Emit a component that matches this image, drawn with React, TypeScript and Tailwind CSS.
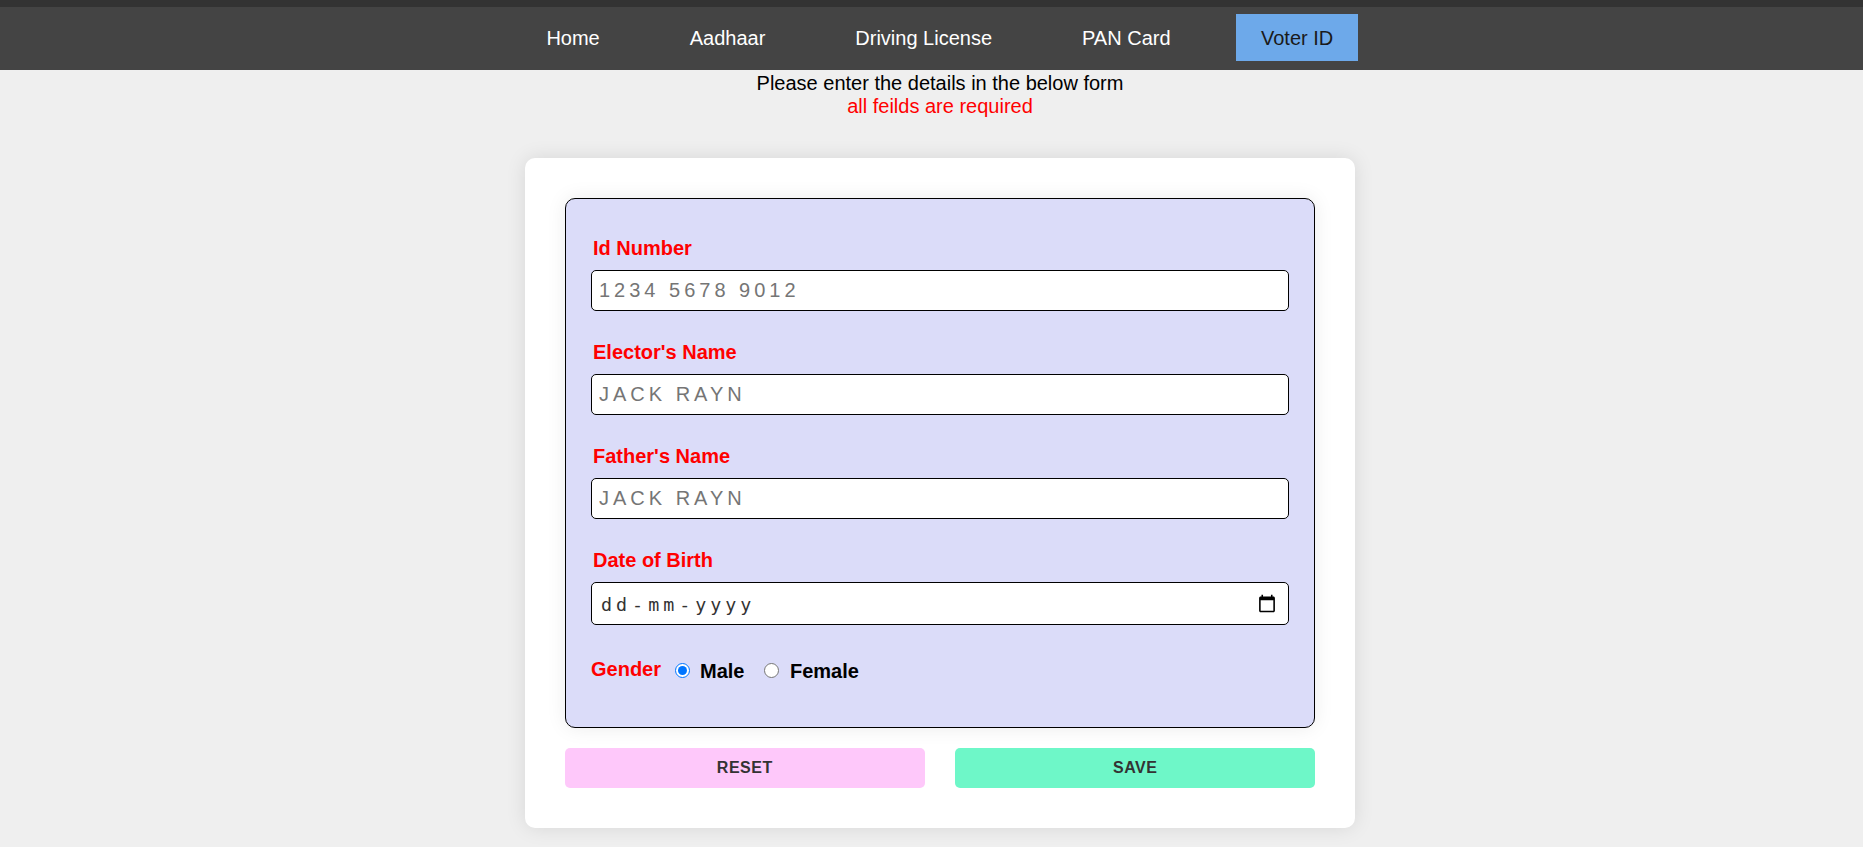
import { useState } from "react";

const links = ["Home", "Aadhaar", "Driving License", "PAN Card"];

const fields = [
  { label: "Id Number", placeholder: "1234 5678 9012" },
  { label: "Elector's Name", placeholder: "JACK RAYN" },
  { label: "Father's Name", placeholder: "JACK RAYN" },
];

function Radio({ checked, onSelect }: { checked: boolean; onSelect: () => void }) {
  return (
    <button
      type="button"
      role="radio"
      aria-checked={checked}
      onClick={onSelect}
      className={
        checked
          ? "flex h-[15px] w-[15px] items-center justify-center rounded-full border-[1.5px] border-[#0075ff] bg-white"
          : "flex h-[15px] w-[15px] items-center justify-center rounded-full border border-[#767676] bg-white"
      }
    >
      {checked && <span className="h-[9px] w-[9px] rounded-full bg-[#0075ff]" />}
    </button>
  );
}

export default function App() {
  const [gender, setGender] = useState("Male");

  return (
    <div className="h-[847px] overflow-hidden bg-[#efefef] font-['Liberation_Sans',Arial,sans-serif] text-xl leading-[23px] text-black">
      <header className="h-[70px] border-t-[7px] border-[#333] bg-[#444]">
        <nav className="flex gap-[41.2px] pt-[7px] pl-[522px] text-white">
          {links.map((link) => (
            <a key={link} className="h-[47px] px-[24.4px] pt-[13px] whitespace-nowrap">
              {link}
            </a>
          ))}
          <a className="h-[47px] w-[122px] bg-[#6da9ea] pt-[13px] text-center whitespace-nowrap text-[#1a1a1a]">
            Voter ID
          </a>
        </nav>
      </header>

      <main className="flex flex-col items-center pl-[17px]">
        <p className="pt-0.5 text-center">
          Please enter the details in the below form
          <br />
          <span className="text-[#f00]">all feilds are required</span>
        </p>

        <form className="mt-10 h-[670px] w-[830px] rounded-[10px] bg-white p-10 shadow-[0_0_20px_rgba(0,0,0,0.1)]">
          <section className="h-[530px] rounded-[10px] border border-black bg-[#dbdcf9] px-[25px] pt-[38px] shadow-[0_0_20px_rgba(0,0,0,0.08)]">
            {fields.map(({ label, placeholder }) => (
              <div key={label} className="h-[104px]">
                <label className="block pl-0.5 font-bold text-[#f00]">{label}</label>
                <input
                  placeholder={placeholder}
                  className="mt-[10px] block h-[41px] w-full rounded-[5px] border border-black bg-white px-[7px] tracking-[4px] outline-none placeholder:text-[#757575]"
                />
              </div>
            ))}

            <label className="block pl-0.5 font-bold text-[#f00]">Date of Birth</label>
            <div className="mt-[10px] flex h-[43px] items-center justify-between rounded-[5px] border border-black bg-white pr-[11px] pl-[9px]">
              <span className="flex gap-0.5 pt-px font-['DejaVu_Sans_Mono',monospace] text-[18.33px] tracking-[4px] text-[#333]">
                <span>dd</span>
                <span className="-mx-px">-</span>
                <span>mm</span>
                <span className="-mx-px">-</span>
                <span>yyyy</span>
              </span>
              <svg viewBox="0 0 24 24" className="h-[19px] w-5">
                <path
                  fill="#000"
                  d="M20 3h-1V1h-2v2H7V1H5v2H4c-1.1 0-2 .9-2 2v16c0 1.1.9 2 2 2h16c1.1 0 2-.9 2-2V5c0-1.1-.9-2-2-2zm0 18H4V8h16v13z"
                />
              </svg>
            </div>

            <div className="mt-[33px] flex items-start font-bold">
              <span className="w-[84px] text-[#f00]">Gender</span>
              <span className="flex w-[89px] gap-[10px] pt-0.5">
                <span className="pt-[3px]">
                  <Radio checked={gender === "Male"} onSelect={() => setGender("Male")} />
                </span>
                Male
              </span>
              <span className="flex gap-[11px] pt-0.5">
                <span className="pt-[3px]">
                  <Radio checked={gender === "Female"} onSelect={() => setGender("Female")} />
                </span>
                Female
              </span>
            </div>
          </section>

          <div className="mt-5 flex gap-[30px] text-base font-bold tracking-[0.5px] text-[#333]">
            <button type="reset" className="h-10 flex-1 rounded-[5px] bg-[#fec8fa]">
              RESET
            </button>
            <button type="button" className="h-10 flex-1 rounded-[5px] bg-[#6ef7c8] pl-px">
              SAVE
            </button>
          </div>
        </form>
      </main>
    </div>
  );
}
